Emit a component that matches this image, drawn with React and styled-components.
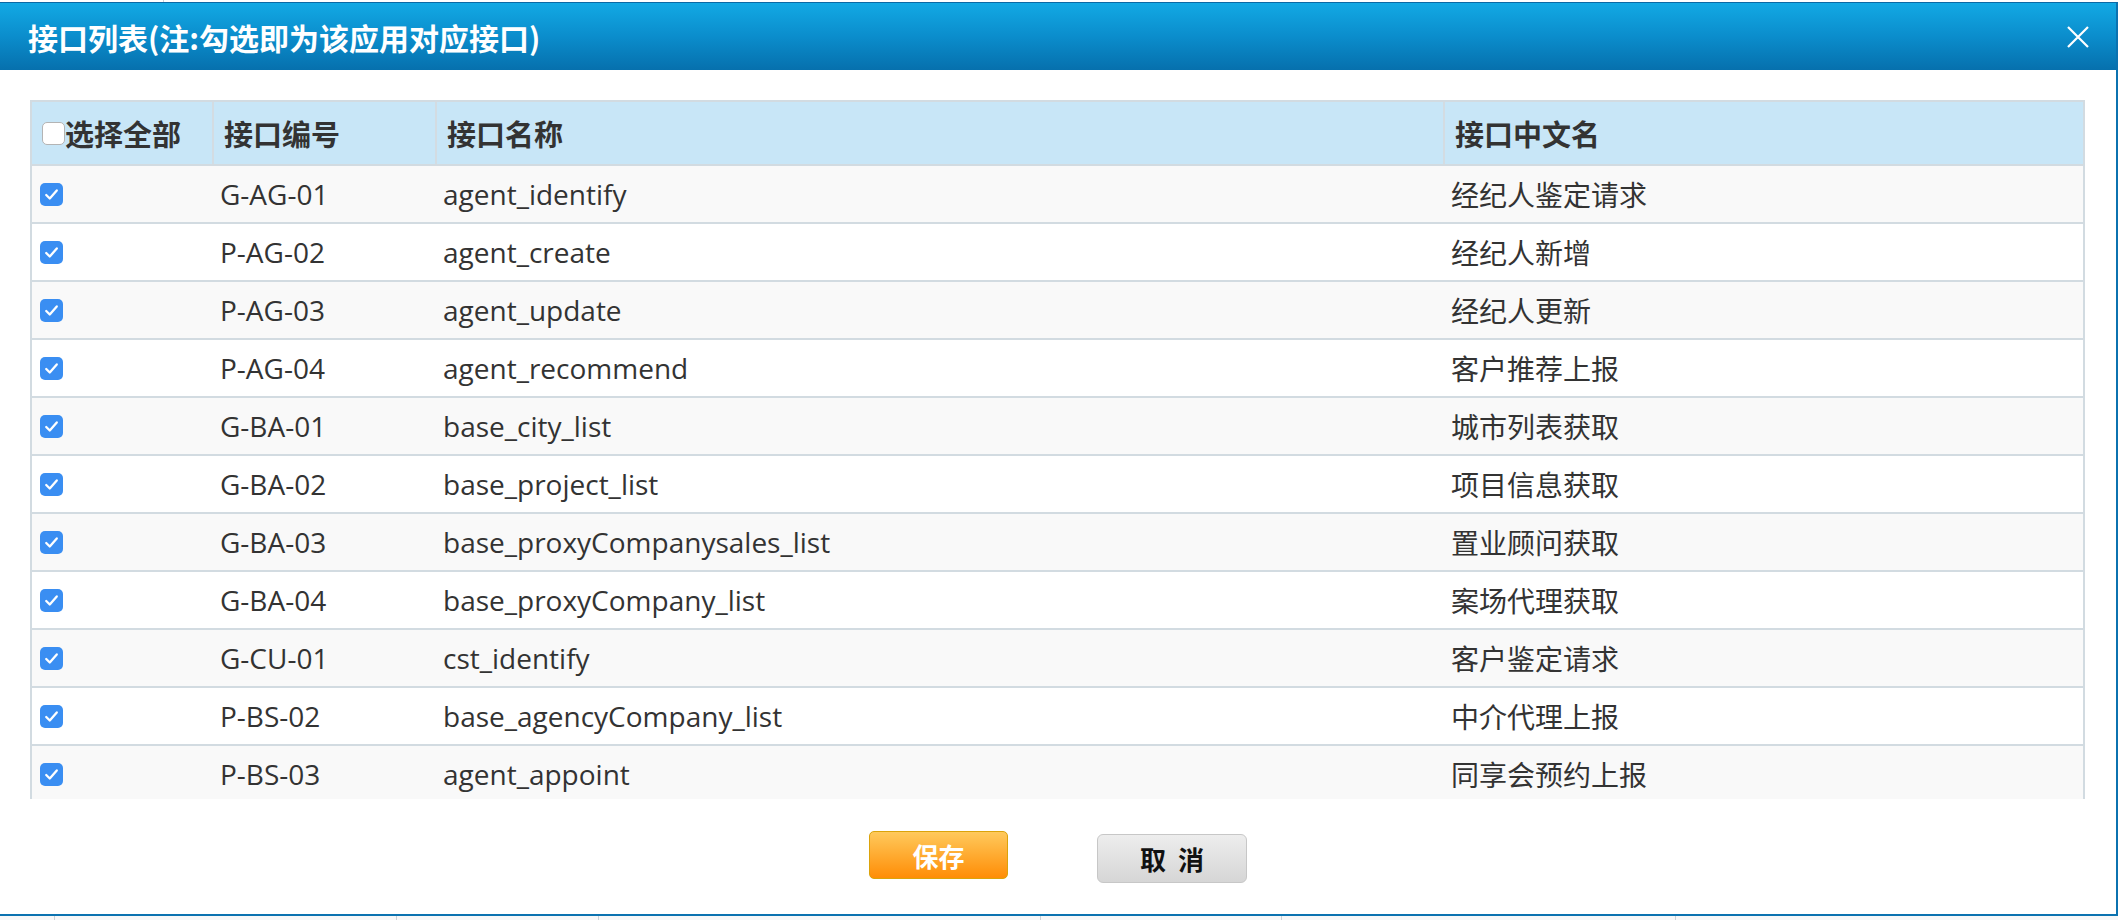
import React from "react"
import styled, { createGlobalStyle } from "styled-components"

const rows = [
  ["G-AG-01", "agent_identify", "经纪人鉴定请求"],
  ["P-AG-02", "agent_create", "经纪人新增"],
  ["P-AG-03", "agent_update", "经纪人更新"],
  ["P-AG-04", "agent_recommend", "客户推荐上报"],
  ["G-BA-01", "base_city_list", "城市列表获取"],
  ["G-BA-02", "base_project_list", "项目信息获取"],
  ["G-BA-03", "base_proxyCompanysales_list", "置业顾问获取"],
  ["G-BA-04", "base_proxyCompany_list", "案场代理获取"],
  ["G-CU-01", "cst_identify", "客户鉴定请求"],
  ["P-BS-02", "base_agencyCompany_list", "中介代理上报"],
  ["P-BS-03", "agent_appoint", "同享会预约上报"],
]

const pageCols = [54, 342, 202, 442, 241, 394]

function Checkbox({ checked }) {
  if (!checked) return <EmptyBox />
  return (
    <CheckedBox>
      <svg width="23" height="23" viewBox="0 0 24 24">
        <path d="M6.5 12.5 L10.2 16.2 L17.5 7.8" fill="none" stroke="#fff" strokeWidth="2.4" strokeLinecap="round" strokeLinejoin="round" />
      </svg>
    </CheckedBox>
  )
}

function App() {
  return (
    <Page>
      <GlobalStyle />
      <TopStrip>
        <StripCell $w={163} />
        <StripCell $line />
      </TopStrip>
      <Dialog>
        <TitleBar>
          <Title>接口列表(注:勾选即为该应用对应接口)</Title>
          <CloseButton>
            <svg width="24" height="24" viewBox="0 0 24 24">
              <path d="M2 2 L22 22 M22 2 L2 22" stroke="#fff" strokeWidth="2.2" fill="none" />
            </svg>
          </CloseButton>
        </TitleBar>
        <Content>
          <TableFrame>
            <HeadRow>
              <HeadCell>
                <Checkbox />
                <span>选择全部</span>
              </HeadCell>
              <HeadCell>接口编号</HeadCell>
              <HeadCell>接口名称</HeadCell>
              <HeadCell>接口中文名</HeadCell>
            </HeadRow>
            <Body>
              {rows.map((r) => (
                <Row key={r[0]}>
                  <Cell $check>
                    <Checkbox checked />
                  </Cell>
                  <Cell>{r[0]}</Cell>
                  <Cell>{r[1]}</Cell>
                  <Cell>{r[2]}</Cell>
                </Row>
              ))}
            </Body>
          </TableFrame>
        </Content>
        <Footer>
          <SaveButton>保存</SaveButton>
          <CancelButton>取 消</CancelButton>
        </Footer>
      </Dialog>
      <BottomStrip>
        {pageCols.map((w, i) => (
          <StripCell key={i} $w={w} $line={i > 0} />
        ))}
        <StripCell $line />
      </BottomStrip>
    </Page>
  )
}

export default App

const GlobalStyle = createGlobalStyle`
  html, body {
    margin: 0;
    padding: 0;
    background: #fff;
    overflow: hidden;
  }
  * {
    box-sizing: border-box;
  }
`
const Page = styled.div`
  width: 2118px;
  height: 920px;
  display: flex;
  flex-direction: column;
  font-family: "Open Sans", "Noto Sans CJK SC", sans-serif;
  color: #333;
`
const TopStrip = styled.div`
  height: 2px;
  display: flex;
  background: #fff;
`
const BottomStrip = styled.div`
  height: 4px;
  display: flex;
  background: #f6f7f8;
`
const StripCell = styled.div`
  width: ${(p) => (p.$w ? p.$w + "px" : "auto")};
  flex: ${(p) => (p.$w ? "none" : "1")};
  border-left: ${(p) => (p.$line ? "1px solid #c9d1d7" : "none")};
`
const Dialog = styled.div`
  height: 914px;
  display: flex;
  flex-direction: column;
  background: #fff;
  border-top: 1px solid #0a69a5;
  border-right: 2px solid #0b72b0;
  border-bottom: 2px solid #0b72b0;
`
const TitleBar = styled.div`
  height: 67px;
  flex: none;
  display: flex;
  align-items: center;
  justify-content: space-between;
  padding: 0 26px 0 28px;
  background: linear-gradient(#12a9e4, #0b8dcc 50%, #0670ad);
`
const Title = styled.div`
  font-family: "Noto Sans CJK SC", sans-serif;
  font-weight: 700;
  font-size: 30px;
  color: #fff;
`
const CloseButton = styled.div`
  width: 24px;
  height: 24px;
  display: flex;
`
const Content = styled.div`
  padding: 30px 31px 0 30px;
`
const TableFrame = styled.div`
  height: 699px;
  overflow: hidden;
  border: 2px solid #d2dbe1;
  border-bottom: none;
`
const HeadRow = styled.div`
  display: grid;
  grid-template-columns: 182px 223px 1008px 1fr;
  height: 64px;
  background: #c8e6f7;
  border-bottom: 2px solid #d2dbe1;
`
const HeadCell = styled.div`
  display: flex;
  align-items: center;
  padding: 0 10px;
  font-family: "Noto Sans CJK SC", sans-serif;
  font-weight: 700;
  font-size: 29px;
  color: #333;
  border-right: 2px solid #d3dce2;
  &:last-child {
    border-right: none;
  }
`
const Body = styled.div`
  display: flex;
  flex-direction: column;
`
const Row = styled.div`
  display: grid;
  grid-template-columns: 182px 223px 1008px 1fr;
  height: 58px;
  flex: none;
  border-bottom: 2px solid #d2dbe1;
  background: #fff;
  &:nth-child(odd) {
    background: #f9f9f9;
  }
`
const Cell = styled.div`
  display: flex;
  align-items: center;
  padding: 0 ${(p) => (p.$check ? "8px" : "6px")};
  font-size: 28px;
  color: #333;
  white-space: nowrap;
`
const EmptyBox = styled.div`
  width: 23px;
  height: 23px;
  flex: none;
  background: #fff;
  border: 1.5px solid #b4b4b4;
  border-radius: 5px;
`
const CheckedBox = styled.div`
  width: 23px;
  height: 23px;
  flex: none;
  display: flex;
  background: #3a8ef2;
  border-radius: 5px;
`
const Footer = styled.div`
  flex: 1;
  display: flex;
  justify-content: center;
  align-items: flex-start;
  gap: 89px;
  padding-top: 32px;
`
const SaveButton = styled.div`
  width: 139px;
  height: 48px;
  display: flex;
  align-items: center;
  justify-content: center;
  border: 1.5px solid #dba30b;
  border-radius: 5px;
  background: linear-gradient(#ffc95c, #ff8d06);
  font-family: "Noto Sans CJK SC", sans-serif;
  font-weight: 700;
  font-size: 26px;
  color: #fff;
`
const CancelButton = styled.div`
  width: 150px;
  height: 49px;
  margin-top: 3px;
  display: flex;
  align-items: center;
  justify-content: center;
  border: 1.5px solid #c7c7c7;
  border-radius: 6px;
  background: linear-gradient(#ededed, #d6d6d6);
  font-family: "Noto Sans CJK SC", sans-serif;
  font-weight: 700;
  font-size: 26px;
  word-spacing: 6px;
  color: #111;
`
